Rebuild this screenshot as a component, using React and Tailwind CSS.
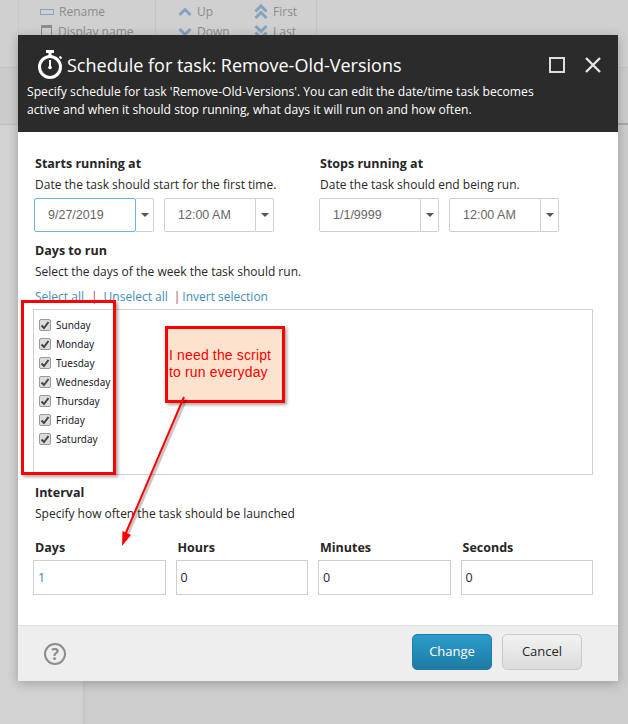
const label = "text-[12.5px] font-bold leading-[18px] text-[#262626]";
const hint = "text-[12px] leading-[18px] text-[#262626]";
const days = ["Sunday", "Monday", "Tuesday", "Wednesday", "Thursday", "Friday", "Saturday"];

const ChevronIcon = ({ down, double }) => (
  <svg width="14" height="16" viewBox="0 0 14 16" fill="none" stroke="#86a2c2" strokeWidth="3" className="shrink-0">
    <g transform={down ? "rotate(180 7 8)" : undefined}>
      {double ? (
        <>
          <path d="M1.5 7.5L7 2l5.5 5.5" />
          <path d="M1.5 14L7 8.5l5.5 5.5" />
        </>
      ) : (
        <path d="M1.5 11L7 5.5l5.5 5.5" />
      )}
    </g>
  </svg>
);

const RibbonItem = ({ icon, text, gap = "gap-[5px]" }) => (
  <div className={`flex h-5 items-center whitespace-nowrap text-[12px] text-[#8c8c8c] ${gap}`}>
    {icon}
    <span>{text}</span>
  </div>
);

const Picker = ({ value, width, focused }) => (
  <div className="flex h-[34px] text-[12.5px] text-[#666]" style={{ fontFamily: "'Liberation Sans', sans-serif" }}>
    <div
      className={`flex items-center border bg-white pl-[13px] pt-[1px] ${
        focused ? "rounded-[2px] border-[#6fb3e0]" : "rounded-l-[2px] border-[#cfcfcf]"
      } ${width}`}
    >
      {value}
    </div>
    <div className="flex w-[18px] items-center justify-center rounded-r-[2px] border border-l-0 border-[#cfcfcf] bg-white">
      <div className="h-0 w-0 border-x-[4px] border-t-[4px] border-x-transparent border-t-[#555]" />
    </div>
  </div>
);

const NumberField = ({ title, value, blue }) => (
  <div className="w-[133px]">
    <div className={`${label} mb-[3px] pl-[2px]`}>{title}</div>
    <div
      className={`flex h-[35px] items-center border-[1.5px] border-[#cfcfcf] pl-[4px] pt-[1px] text-[12.5px] ${
        blue ? "text-[#3b7fb5]" : "text-[#262626]"
      }`}
    >
      {value}
    </div>
  </div>
);

const StopWatch = () => (
  <svg width="26" height="30" viewBox="0 0 26 30" fill="none" className="shrink-0">
    <rect x="9" y="0" width="8" height="3" fill="#fff" />
    <rect x="11.5" y="3" width="3" height="3" fill="#fff" />
    <circle cx="13" cy="17" r="10.5" stroke="#fff" strokeWidth="3" />
    <rect x="12" y="10" width="2" height="7" fill="#fff" />
    <circle cx="13" cy="17.5" r="1.8" fill="#fff" />
    <path d="M22.5 6.5l2 2" stroke="#fff" strokeWidth="2" />
  </svg>
);

const App = () => {
  return (
    <div
      className="relative flex h-[724px] w-[628px] flex-col overflow-hidden bg-[#cccccc]"
      style={{ fontFamily: "'Open Sans', sans-serif" }}
    >
      {/* page behind the dialog */}
      <div className="flex h-[68px] shrink-0 border-b border-[#c4c4c4] bg-[#d0d0d0]">
        <div className="w-[19px] border-r border-[#c8c8c8]" />
        <div className="flex w-[137px] flex-col border-r border-[#c4c4c4] pl-[21px] pt-[2px]">
          <RibbonItem text="Rename" icon={<div className="h-[6px] w-[14px] border border-[#86a2c2]" />} />
          <RibbonItem
            text="Display name"
            gap="gap-[6px]"
            icon={<div className="ml-[1px] h-[14px] w-[11px] border border-[#8c8c8c] border-t-[3px]" />}
          />
        </div>
        <div className="flex w-[161px] gap-[20px] border-r border-[#c4c4c4] pl-[22px] pt-[2px]">
          <div className="flex w-[56px] flex-col">
            <RibbonItem text="Up" icon={<ChevronIcon />} />
            <RibbonItem text="Down" icon={<ChevronIcon down />} />
          </div>
          <div className="flex flex-col">
            <RibbonItem text="First" icon={<ChevronIcon double />} />
            <RibbonItem text="Last" icon={<ChevronIcon down double />} />
          </div>
        </div>
      </div>
      <div className="flex h-[57px] shrink-0">
        <div className="w-[18px] border-b border-[#c2c2c2]" />
        <div className="flex-1 border-b-2 border-[#a8a8a8]" />
      </div>
      <div className="flex flex-1">
        <div className="w-[85px] border-r-2 border-[#c6c6c6] bg-[#d2d2d2]" />
        <div className="flex-1" />
      </div>

      {/* dialog */}
      <div className="absolute left-[18px] top-[35px] flex h-[646px] w-[600px] flex-col bg-white shadow-[0_2px_10px_rgba(0,0,0,0.25)]">
        <div className="h-[97px] shrink-0 bg-[#2b2b2b] pl-[9px] pr-[17px] pt-[15px] text-white">
          <div className="flex h-[30px] items-center">
            <div className="ml-[10px]">
              <StopWatch />
            </div>
            <h1 className="ml-[4px] flex-1 text-[18px] leading-[28px]">Schedule for task: Remove-Old-Versions</h1>
            <div className="mr-[20px] h-[16px] w-[16px] border-2 border-[#dddddd]" />
            <svg width="16" height="16" viewBox="0 0 16 16" fill="none" stroke="#e4e4e4" strokeWidth="2.4">
              <path d="M1 1l14 14M15 1L1 15" />
            </svg>
          </div>
          <p className="mt-[3px] w-[520px] text-[12.15px] leading-[18px]">
            Specify schedule for task 'Remove-Old-Versions'. You can edit the date/time task becomes active and when it
            should stop running, what days it will run on and how often.
          </p>
        </div>

        <div className="flex flex-1 flex-col pl-[15px] pr-[25px] pt-[23px]">
          <div className="flex">
            <div className="w-[287px] pl-[2px]">
              <div className={label}>Starts running at</div>
              <div className={`${hint} mt-[3px]`}>Date the task should start for the first time.</div>
              <div className="-ml-[1px] mt-[4px] flex gap-[10px]">
                <Picker value="9/27/2019" width="w-[102px]" focused />
                <Picker value="12:00 AM" width="w-[92px]" />
              </div>
            </div>
            <div>
              <div className={label}>Stops running at</div>
              <div className={`${hint} mt-[3px]`}>Date the task should end being run.</div>
              <div className="-ml-[1px] mt-[4px] flex gap-[10px]">
                <Picker value="1/1/9999" width="w-[102px]" />
                <Picker value="12:00 AM" width="w-[92px]" />
              </div>
            </div>
          </div>

          <div className={`${label} mt-[10px] pl-[2px]`}>Days to run</div>
          <div className={`${hint} mt-[3px] pl-[2px]`}>Select the days of the week the task should run.</div>
          <div className="mt-[7px] flex h-[18px] items-center pl-[2px] text-[12px] text-[#3f8db5]">
            <span>Select all</span>
            <span className="ml-[7px] text-[#a0476a]">|</span>
            <span className="ml-[6px]">Unselect all</span>
            <span className="ml-[6px] text-[#a0476a]">|</span>
            <span className="ml-[2px]">Invert selection</span>
          </div>

          <div className="mt-[3px] flex h-[166px] flex-col gap-[3px] border border-[#cfcfcf] pl-[5px] pt-[7px]">
            {days.map((day) => (
              <div key={day} className="flex h-[16px] items-center gap-[5px]">
                <div className="flex h-[12px] w-[12px] items-center justify-center rounded-[2px] border border-[#999] bg-[#dcdcdc]">
                  <svg width="10" height="10" viewBox="0 0 10 10" fill="none">
                    <path d="M1.5 5.5L4 8l4.5-6" stroke="#444" strokeWidth="2" />
                  </svg>
                </div>
                <span className="text-[10px] text-[#1a1a2a]" style={{ fontFamily: "'Noto Sans', sans-serif" }}>
                  {day}
                </span>
              </div>
            ))}
          </div>

          <div className={`${label} mt-[9px] pl-[2px]`}>Interval</div>
          <div className={`${hint} mt-[3px] pl-[2px]`}>Specify how often the task should be launched</div>
          <div className="mt-[16px] flex gap-[10px]">
            <NumberField title="Days" value="1" blue />
            <NumberField title="Hours" value="0" />
            <NumberField title="Minutes" value="0" />
            <NumberField title="Seconds" value="0" />
          </div>
        </div>

        <div className="flex h-[56px] shrink-0 items-center justify-between border-t border-[#e2e2e2] bg-[#eeeeee] pl-[26px] pr-[36px]">
          <div className="flex h-[22px] w-[22px] items-center justify-center rounded-full border-[2.5px] border-[#8c8c8c] text-[16px] font-bold text-[#8c8c8c]">
            ?
          </div>
          <div className="mb-[4px] flex gap-[10px]">
            <button className="h-[36px] w-[80px] rounded-[5px] border border-[#1f7da6] bg-gradient-to-b from-[#2a9ccb] to-[#1f7ba3] text-[13px] text-white">
              Change
            </button>
            <button className="h-[36px] w-[80px] rounded-[5px] border border-[#c8c8c8] bg-gradient-to-b from-[#f2f2f2] to-[#dcdcdc] text-[13px] text-[#262626]">
              Cancel
            </button>
          </div>
        </div>
      </div>

      {/* red annotations drawn over the screenshot */}
      <div className="absolute left-[21px] top-[300px] h-[175px] w-[95px] border-[3px] border-[#ff0000] shadow-[2px_2px_3px_rgba(0,0,0,0.35)]" />
      <div
        className="absolute left-[165px] top-[326px] h-[77px] w-[120px] border-[3px] border-[#ff0000] bg-[#fde3cd] pl-[1px] pt-[18px] text-[14px] leading-[16.5px] tracking-[0.15px] text-[#ff0000] shadow-[2px_2px_3px_rgba(0,0,0,0.35)]"
        style={{ fontFamily: "'Liberation Sans', sans-serif" }}
      >
        I need the script
        <br />
        to run everyday
      </div>
      <svg className="absolute left-0 top-0" width="628" height="724" fill="none">
        <path d="M186 399L127 536" stroke="rgba(0,0,0,0.22)" strokeWidth="3" />
        <path d="M184 397L125 535" stroke="#ff0000" strokeWidth="2" />
        <path d="M122 546L122.5 531L131 535Z" fill="#ff0000" />
      </svg>
    </div>
  );
};

export default App;
